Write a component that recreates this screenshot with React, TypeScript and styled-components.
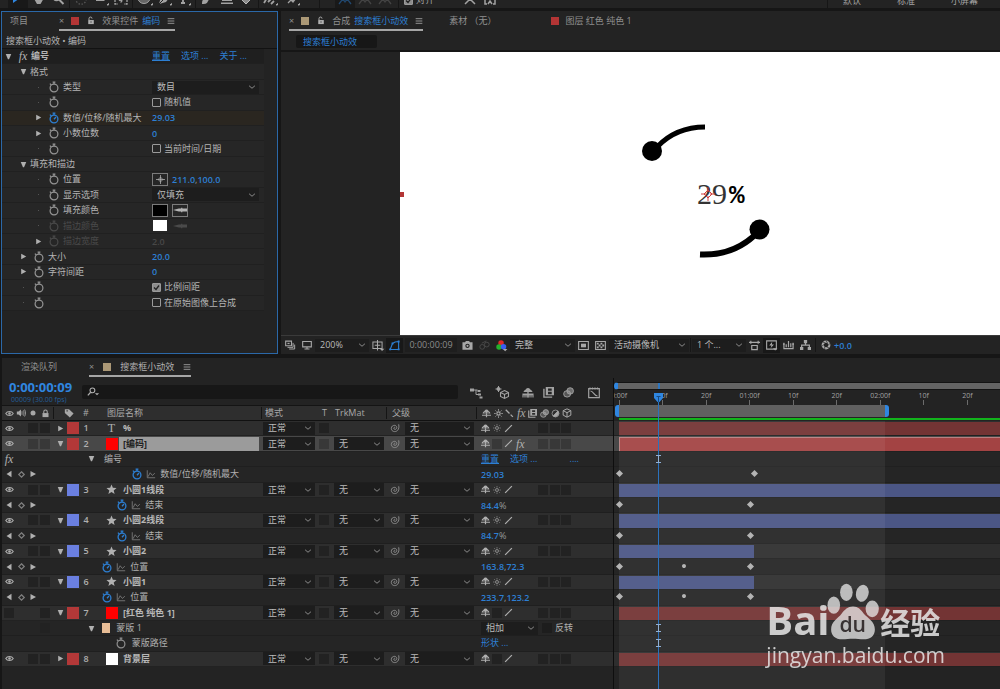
import React from "react";
import styled, { createGlobalStyle, css } from "styled-components";

const Global = createGlobalStyle`
  * { box-sizing: border-box; }
  body {
    margin: 0;
    background: #161616;
    color: #b0b0b0;
    font-family: "Open Sans", "Noto Sans CJK SC", sans-serif;
    font-size: 9px;
    line-height: 12px;
    overflow: hidden;
  }
  button, input, select { font: inherit; color: inherit; margin: 0; }
  svg { display: block; flex: none; }
`;

const blue = "#2d7fd3";

/* ---------- icons ---------- */

type IconProps = { size?: number; color?: string };

const Svg = styled.svg<{ $c?: string }>`
  color: ${(p) => p.$c || "inherit"};
  fill: none;
  stroke: currentColor;
  overflow: visible;
`;

const glyphs: Record<string, React.ReactNode> = {
  right: <path d="M3.5 3 9 6 3.5 9Z" fill="currentColor" stroke="none" />,
  left: <path d="M8.5 2.8 3.5 6l5 3.2Z" fill="currentColor" stroke="none" />,
  down: <path d="M3 3.2h6L6.6 9H5.4Z" fill="currentColor" stroke="none" />,
  chevron: <path d="M2.5 4.5 6 7.5l3.5-3" strokeWidth="1.2" />,
  watch: (
    <>
      <circle cx="6" cy="7" r="3.9" strokeWidth="1.2" />
      <path d="M4.6 1.2h2.8M6 1.5v1.4M1.9 2.6l1.3 1.3" strokeWidth="1.3" />
    </>
  ),
  watchOn: (
    <>
      <circle cx="6" cy="7" r="3.9" strokeWidth="1.3" />
      <path d="M4.6 1.2h2.8M6 1.5v1.4M1.9 2.6l1.3 1.3M6 7.2l2-2.2" strokeWidth="1.3" />
    </>
  ),
  graph: <path d="M1.5 1.5v9h9.5M2.5 9.2 5 4.5l2.6 3.2 3-2.6" strokeWidth="1" />,
  diamond: <path d="M6 3 9 6 6 9 3 6Z" strokeWidth="1.3" />,
  eye: (
    <>
      <path d="M1 6c2-3.4 8-3.4 10 0-2 3.4-8 3.4-10 0Z" strokeWidth="1.4" />
      <circle cx="6" cy="6" r="1.7" fill="currentColor" stroke="none" />
    </>
  ),
  speaker: (
    <>
      <path d="M1 4.3h2L6 1.8v8.4L3 7.7H1Z" fill="currentColor" stroke="none" />
      <path d="M7.2 3.8v4.4M8.8 2.8c1 2 1 4.4 0 6.4M10.3 1.8c1.5 2.8 1.5 5.6 0 8.4" />
    </>
  ),
  solo: <circle cx="6" cy="6" r="3" fill="currentColor" stroke="none" />,
  lock: (
    <>
      <path d="M2 5.4h8v5.4H2Z" fill="currentColor" stroke="none" />
      <path d="M3.7 5.5V3.6a2.3 2.3 0 0 1 4.6 0v1.9" strokeWidth="1.4" />
    </>
  ),
  unlock: (
    <>
      <path d="M3 5.4h7.4v5.4H3Z" fill="currentColor" stroke="none" />
      <path d="M4 5.5V3.4a2 2 0 0 1 4 0" strokeWidth="1.3" />
      <path d="M6.7 7v2" stroke="#232323" />
    </>
  ),
  tag: <path fillRule="evenodd" d="M1 1.5h5l5.5 5-4.5 4.8L1 6Zm2 1.2v1.5h1.5V2.7Z" fill="currentColor" stroke="none" />,
  star: (
    <path d="m6 .5 1.5 3.7 4 .2-3.100 2.600 1 3.900L6 8.800 2.600 10.900l1-3.900-3.100-2.600 4-.2Z" fill="currentColor" stroke="none" />
  ),
  whip: (
    <path d="M6.200 5.200C5 4.800 3.900 6.200 4.800 7.100c1.200 1.200 3.400.2 3.300-1.700C8 3.400 6.200 2.500 4.400 2.900 2 3.400.9 6 2 8.200c1.300 2.600 5.200 2.800 7.200.5C10.700 7 11 4.500 10.400 1.600" strokeWidth="1.100" />
  ),
  shy: (
    <>
      <path d="M.8 6C1 3.500 3 3.500 3.500 2.200 4.500.2 7.500.2 8.500 2.200 9 3.500 11 3.500 11.200 6Z" fill="currentColor" stroke="none" />
      <path d="M0 8.300h12M6 5.500v5.500" strokeWidth="1.600" />
      <path d="M4 4v2M8 4v2" stroke="#2a2a2a" strokeWidth="1" />
    </>
  ),
  sun: (
    <>
      <circle cx="6" cy="6" r="2.200" strokeWidth="1.500" />
      <path d="M6 .3v1.900M6 9.800v1.900M.3 6h1.900M9.800 6h1.900M2 2l1.200 1.200M8.800 8.800 10 10M10 2 8.800 3.200M3.200 8.800 2 10" strokeWidth="1.300" />
    </>
  ),
  slash: <path d="M1.500 10.500 10.500 1.500" strokeWidth="1.600" />,
  back: <path d="M1 1l5 5M7.500 7.500 10.500 10.500" strokeWidth="1.800" />,
  film: (
    <>
      <path fillRule="evenodd" d="M3 0h9v9H3Zm2.500 1.500V4h4V1.500Zm0 3.700v2.600h4V5.200Z" fill="currentColor" stroke="none" />
      <path d="M1 2v9h9" strokeWidth="1.500" />
    </>
  ),
  motion: (
    <>
      <ellipse cx="4.500" cy="7.500" rx="3.800" ry="3.500" fill="#555" />
      <ellipse cx="7.800" cy="4.300" rx="3.600" ry="3.500" fill="currentColor" fillOpacity=".6" />
    </>
  ),
  half: (
    <>
      <circle cx="6" cy="6" r="4.600" />
      <path d="M2.800 9.200A4.600 4.600 0 0 0 9.200 2.800Z" fill="currentColor" />
    </>
  ),
  cube: <path d="M6 1 10.600 3.200v5.400L6 11 1.400 8.600V3.200ZM1.400 3.200 6 5.600l4.600-2.400M6 5.600V11" strokeWidth="1.200" />,
  menu: <path d="M1 2.500h10M1 6h10M1 9.500h10" strokeWidth="1.500" />,
  search: (
    <>
      <circle cx="6.500" cy="4" r="2.900" strokeWidth="1.300" />
      <path d="M4.400 6.300 1 10" strokeWidth="1.500" />
      <path d="M9.500 7.500h5L12 10Z" fill="currentColor" stroke="none" />
    </>
  ),
  target: (
    <>
      <path d="M6 2.800 9.200 6 6 9.200 2.800 6Z" strokeWidth="1" />
      <path d="M6 0v12M0 6h12" strokeWidth="1" />
    </>
  ),
  dropper: <path d="M0 6 5 4.700h2V4h1v.8h4v2.400H8V8H7v-.7H5Z" fill="currentColor" stroke="none" />,
  layersView: (
    <>
      <path d="M.8 1.300h7v5.500h-7Z" strokeWidth="1.300" />
      <path d="M3 3.400h2.500v1.500H3Z" fill="currentColor" stroke="none" />
      <path d="M3 8.800h6.700V3.500M5 10.800h6.600V5.500" strokeWidth="1.200" />
    </>
  ),
  monitor: <path d="M.8 1.800h10.400v6.400H.8ZM6 8.200v2.300M3 10.700h6" strokeWidth="1.300" />,
  guides: (
    <>
      <path d="M1 2.200h10v7H1ZM6 0v11.500M3 5.700h6" strokeWidth="1.100" />
      <path d="M8.500 9.500h5L11 12Z" fill="currentColor" stroke="none" />
    </>
  ),
  mask: (
    <>
      <path d="M1.300 10.300 3.800 3.800C6 1.800 8 1.600 10.500 1.600v8.700Z" strokeWidth="1.200" />
      <path d="M.3 9.300h2v2h-2ZM9.500.6h2v2h-2ZM9.500 9.300h2v2h-2ZM2.800 2.800h2v2h-2Z" fill="currentColor" stroke="none" />
    </>
  ),
  camera: (
    <>
      <path fillRule="evenodd" d="M.5 2.500h2.800L4.300 1h3.400l1 1.500h2.800v8H.5ZM6 4a2.400 2.400 0 1 0 0 4.800A2.400 2.400 0 0 0 6 4Z" fill="currentColor" stroke="none" />
      <circle cx="6" cy="6.400" r="1.200" fill="currentColor" stroke="none" />
    </>
  ),
  snap: (
    <>
      <circle cx="3.500" cy="7.500" r="2.600" />
      <circle cx="8.500" cy="5" r="2.600" />
      <path d="M3 3.500 8 1" />
    </>
  ),
  rgb: (
    <g stroke="none">
      <circle cx="5.500" cy="3.300" r="3" fill="#e02828" />
      <circle cx="3.300" cy="7.500" r="3" fill="#23b12c" />
      <circle cx="8.200" cy="7.300" r="3" fill="#3a5ef0" />
      <path d="M7.500 9.800h5L10 12.300Z" fill="#a8a8a8" />
    </g>
  ),
  region: (
    <>
      <path d="M.7 1.700h10.600v8.600H.7Z" strokeWidth="1.200" />
      <path d="M3.300 4h5.400v4H3.300Z" fill="currentColor" stroke="none" />
    </>
  ),
  checker: (
    <>
      <path d="M.7 1.700h10.600v8.600H.7Z" strokeWidth="1.200" />
      <path d="M2 3h2v2H2ZM6 3h2v2H6ZM4 5h2v2H4ZM8 5h2v2H8ZM2 7h2v2H2ZM6 7h2v2H6Z" fill="currentColor" stroke="none" />
    </>
  ),
  aspect: <path d="M0 2.500h12M2 .8v3.400M10 .8v3.400M3 6h6v4.600H3Z" strokeWidth="1.300" />,
  fast: (
    <>
      <path d="M.7 1h10.600v9H.7Z" strokeWidth="1.200" />
      <path d="M6.800 2 3.500 6H6l-1 3 3.700-4H6.400Z" fill="currentColor" stroke="none" />
      <path d="M7.500 9h5L10 11.500Z" fill="currentColor" stroke="none" />
    </>
  ),
  histogram: <path d="M1 3v6.500h10V3M3.500 8V4.500M6 8V1M8.500 8V3.500M0 4.500h2M10 4.500h2" strokeWidth="1.300" />,
  tree: (
    <>
      <path d="M4.200 0h3.600v3.600H4.200ZM0 7.500h3.600V11H0ZM8.400 7.500H12V11H8.400Z" fill="currentColor" stroke="none" />
      <path d="M6 3v2.500M1.800 8V5.500h8.400V8" strokeWidth="1.300" />
    </>
  ),
  aperture: (
    <>
      <circle cx="6" cy="6" r="4" strokeWidth="2.600" />
      <path d="M6 .5 8 4M11 4 7.800 6.800M10 9.500 6.800 8.500M4.500 11 4.300 8M1 7.500l2.500-2M2.300 2.500l3 1" stroke="#232323" strokeWidth=".8" />
    </>
  ),
  flow: (
    <>
      <path d="M0 1.500h4v3H0ZM7.500 3h3v2h-3ZM8 6.500h3v2H8ZM9.500 9.500h3v2h-3Z" fill="currentColor" stroke="none" />
      <path d="M4 3h3.500M6 3v4.500h2" />
    </>
  ),
  draft: (
    <>
      <path d="m8.500 3.500 4 2v4l-4 2-4-2v-4ZM4.500 5.500l4 2 4-2M8.500 7.500v4" strokeWidth="1.100" />
      <circle cx="2.500" cy="2" r="1.900" fill="currentColor" stroke="none" />
      <path d="M2.500-1v6M-.5 2h6" />
    </>
  ),
  hideShy: (
    <>
      <path d="M0 10.500V6.500h12v4Z" fill="#6a6a6a" stroke="none" />
      <path d="M1.500 5C2 3 3.500 3.200 4 2 5 .5 7 .5 8 2c.5 1.200 2 1 2.500 3Z" fill="currentColor" stroke="none" />
      <path d="M1 7.500h10M6 5v5.500" strokeWidth="1.300" />
    </>
  ),
  editor: <path d="M.7 1.700h10.600v9H.7ZM2 .5v2M4.500.5v2M7 .5v2M9.500.5v2M2.500 4c3 0 3.500 5 7 5" strokeWidth="1.200" />,
  arrow: <path d="M1 0h11v2.500L7.500 4.500 1 9Z" fill="currentColor" stroke="none" />,
  hand: <path d="M1 3c2-1 2 3 3 2V0h5v5c2-1 2-3 3-1L8.500 10H5Z" fill="currentColor" stroke="none" />,
  zoom: (
    <>
      <circle cx="4.500" cy="3" r="3.500" strokeWidth="1.500" />
      <path d="m7 5.500 4.500 4.500" strokeWidth="2" />
    </>
  ),
  orbit: <circle cx="6" cy="5" r="5.200" strokeDasharray="1.500 1.500" strokeWidth="1.300" />,
  video: (
    <>
      <path d="M1 0h8.500v7H1Z" fill="currentColor" stroke="none" />
      <path d="M12 11h1.500V9.500Z" fill="currentColor" />
    </>
  ),
  pan: <path d="M0 2v8h3M12 2v8H9M6 2v5M3.500 5 6 8l2.500-3" strokeWidth="1.300" strokeDasharray="2.500 1" />,
  ellipse: (
    <>
      <ellipse cx="6" cy="4" rx="6" ry="5.500" fill="#666" />
      <path d="M13 11h1.500V9.500Z" fill="currentColor" />
    </>
  ),
  pen: (
    <>
      <path d="M1 10 3 3 7 0l4 4-3 4Z" fill="currentColor" stroke="none" />
      <path d="m1 10 5-5" stroke="#232323" />
      <path d="M12 11h1.500V9.500Z" fill="currentColor" />
    </>
  ),
  type: (
    <>
      <path d="M5 0v8.500M3 9h4" strokeWidth="1.800" />
      <path d="M11 11h1.500V9.500Z" fill="currentColor" />
    </>
  ),
  brush: <path d="M1 10c0-4 1-5 3-5l7-7 1.500 2L7 7c-1 3-3 3-6 3Z" fill="currentColor" stroke="none" />,
  stamp: <path d="M1 5h10v2H1ZM0 8.500h12V10H0ZM4 0h4v5H4Z" fill="currentColor" stroke="none" />,
  eraser: <path d="m1 6 5-5 5 3-6 6Z" fill="#8a8a8a" stroke="#bbb" />,
  roto: (
    <>
      <path d="M0 9 3 4l4-4M4 8l6-6M7 10l3-3" strokeWidth="1.800" />
      <path d="M12 11h1.500V9.500Z" fill="currentColor" />
    </>
  ),
  pin: (
    <>
      <path d="M2 9 5 6M3 4l4 4 3-4-3-4Z" fill="currentColor" strokeWidth="1.300" />
      <path d="M12 11h1.500V9.500Z" fill="currentColor" />
    </>
  ),
  mesh: <path d="m0 10 6-8 6 8M3 4l3 4 3-4" strokeWidth="1.300" />,
  snapA: <path d="m1 10 5-5 5 5" strokeWidth="1.500" />,
  snapB: <path d="M1 6v4h2M11 6v4H9M4 10l2-3 2 3" strokeWidth="1.500" />,
};

const Icon = ({ name, size = 10, color }: IconProps & { name: string }) => (
  <Svg viewBox="0 0 12 12" width={size} height={size} $c={color} aria-hidden="true">
    {glyphs[name]}
  </Svg>
);

/* ---------- shared controls ---------- */

const PlainButton = styled.button<{ $c?: string }>`
  border: 0;
  padding: 0;
  background: none;
  display: inline-flex;
  align-items: center;
  justify-content: center;
  white-space: pre;
  color: ${(p) => p.$c || "inherit"};
`;

const Value = styled(PlainButton)<{ $dim?: boolean }>`
  color: ${(p) => (p.$dim ? "#484848" : blue)};
  font-weight: 600;
  padding-top: 1px;
  em {
    font-style: normal;
    font-weight: 400;
    color: #999;
  }
`;

const LinkText = styled.a`
  color: ${blue};
  text-decoration: none;
  white-space: nowrap;
`;

const UnderlinedLink = styled(LinkText)`
  text-decoration: underline;
  text-underline-offset: 1px;
`;

const SelectBox = styled.span<{ $w: number }>`
  display: inline-flex;
  align-items: center;
  width: ${(p) => p.$w}px;
  height: 13px;
  background: #1d1d1d;
  position: relative;
  svg {
    position: absolute;
    right: 2px;
    pointer-events: none;
  }
`;

const NativeSelect = styled.select`
  appearance: none;
  width: 100%;
  height: 13px;
  border: 0;
  background: none;
  padding: 0 14px 0 5px;
  line-height: 12px;
  color: #bababa;
`;

const Select = ({ label, value, width }: { label: string; value: string; width: number }) => (
  <SelectBox $w={width}>
    <NativeSelect aria-label={label} defaultValue={value}>
      <option>{value}</option>
    </NativeSelect>
    <Icon name="chevron" size={10} color="#8a8a8a" />
  </SelectBox>
);

const CheckLabel = styled.label`
  display: inline-flex;
  align-items: center;
  gap: 3px;
  white-space: nowrap;
`;

const CheckInput = styled.input`
  appearance: none;
  width: 9px;
  height: 9px;
  border: 1px solid #9a9a9a;
  border-radius: 1px;
  &:checked {
    background: #8d8d8d;
  }
`;

const CheckWrap = styled.span`
  position: relative;
  display: inline-flex;
  svg {
    position: absolute;
    inset: 0;
    pointer-events: none;
  }
`;

const Check = ({ text, checked }: { text: string; checked?: boolean }) => (
  <CheckLabel>
    <CheckWrap>
      <CheckInput type="checkbox" defaultChecked={checked} />
      {checked && (
        <Svg viewBox="0 0 9 9" width={9} height={9} $c="#222">
          <path d="M2 4.500 4 6.500 7 2.500" strokeWidth="1.300" />
        </Svg>
      )}
    </CheckWrap>
    {text}
  </CheckLabel>
);

const Swatch = styled.i<{ $c: string; $w?: number; $h?: number }>`
  flex: none;
  width: ${(p) => p.$w || 8}px;
  height: ${(p) => p.$h || 8}px;
  background: ${(p) => p.$c};
`;

const TabStrip = styled.div`
  display: flex;
  height: 19px;
  color: #909090;
`;

const TabItem = styled.div<{ $active?: boolean; $left: number; $gap?: number }>`
  display: flex;
  align-items: center;
  gap: ${(p) => p.$gap || 7}px;
  margin-left: ${(p) => p.$left}px;
  white-space: pre;
  border-bottom: 2px solid ${(p) => (p.$active ? "#a6a6a6" : "transparent")};
`;

const TabName = styled(PlainButton)`
  b {
    font-weight: 400;
    color: ${blue};
    margin-left: 4px;
  }
`;

/* ---------- top toolbar ---------- */

const ToolBar = styled.div`
  display: flex;
  align-items: flex-end;
  height: 8px;
  overflow: hidden;
  background: #232323;
  padding-left: 8px;
  color: #a2a2a2;
`;

const Tool = styled(PlainButton)<{ $on?: boolean; $w?: number }>`
  flex: none;
  width: ${(p) => p.$w || 20}px;
  height: 19px;
  padding-top: 2px;
  background: ${(p) => (p.$on ? "#191919" : "none")};
`;

const ToolSep = styled.i<{ $m?: number }>`
  flex: none;
  width: 1px;
  height: 8px;
  margin: 0 ${(p) => p.$m || 1}px;
  background: #161616;
`;

const ToolText = styled.div`
  display: flex;
  gap: 36px;
  height: 15px;
  padding: 0 22px 0 14px;
  white-space: nowrap;
`;

const SnapToggle = styled.div`
  display: flex;
  align-items: flex-start;
  height: 14px;
  padding: 0 26px 0 2px;
`;

const Spacer = styled.i`
  flex: 1;
`;

const TopToolbar = () => (
  <ToolBar role="toolbar" aria-label="工具">
    <Tool $on aria-label="选取"><Icon name="arrow" size={12} color="#2f86e0" /></Tool>
    <Tool aria-label="手形"><Icon name="hand" size={12} /></Tool>
    <Tool aria-label="缩放"><Icon name="zoom" size={12} /></Tool>
    <ToolSep />
    <Tool aria-label="旋转"><Icon name="orbit" size={12} color="#555" /></Tool>
    <Tool aria-label="摄像机"><Icon name="video" size={12} /></Tool>
    <Tool aria-label="锚点"><Icon name="pan" size={12} /></Tool>
    <ToolSep />
    <Tool aria-label="椭圆"><Icon name="ellipse" size={12} /></Tool>
    <Tool aria-label="钢笔"><Icon name="pen" size={12} /></Tool>
    <Tool aria-label="文字"><Icon name="type" size={12} /></Tool>
    <ToolSep />
    <Tool aria-label="画笔"><Icon name="brush" size={12} /></Tool>
    <Tool aria-label="仿制图章"><Icon name="stamp" size={12} /></Tool>
    <Tool aria-label="橡皮擦"><Icon name="eraser" size={12} /></Tool>
    <ToolSep />
    <Tool aria-label="Roto 笔刷"><Icon name="roto" size={12} /></Tool>
    <Tool $w={24} aria-label="操控点"><Icon name="pin" size={12} /></Tool>
    <ToolSep $m={15} />
    <Tool $on aria-label="本地轴"><Icon name="mesh" size={12} color="#21486f" /></Tool>
    <Tool aria-label="世界轴"><Icon name="mesh" size={12} color="#444" /></Tool>
    <Tool aria-label="视图轴"><Icon name="mesh" size={12} color="#444" /></Tool>
    <ToolSep $m={3} />
    <SnapToggle><Check text="对齐" checked /></SnapToggle>
    <Tool aria-label="边缘对齐"><Icon name="snapA" size={12} /></Tool>
    <Tool aria-label="框对齐"><Icon name="snapB" size={12} /></Tool>
    <Spacer />
    <ToolSep />
    <ToolText>
      <PlainButton>默认</PlainButton>
      <PlainButton>标准</PlainButton>
      <PlainButton>小屏幕</PlainButton>
    </ToolText>
  </ToolBar>
);

/* ---------- effect controls ---------- */

const EffectsPanel = styled.section`
  flex: 0 0 277px;
  margin-left: 1px;
  border: 1px solid #2b68a8;
  background: #232323;
  padding-bottom: 42px;
`;

const Breadcrumb = styled.div`
  height: 18px;
  padding: 4px 4px 0;
  border-bottom: 1px solid #121212;
  color: #b4b4b4;
`;

const EffectRows = styled.div`
  display: grid;
  grid-template-rows: repeat(17, 1fr);
  height: 262px;
  margin-right: 13px;
`;

const EffectRow = styled.div<{ $tint?: "key" | "head"; $dim?: boolean }>`
  display: grid;
  grid-template-columns: 150px 1fr;
  align-items: center;
  border-bottom: 1px solid #202020;
  background: ${(p) => (p.$tint === "key" ? "#2a2620" : p.$tint === "head" ? "#1f1f1f" : "#262626")};
  color: ${(p) => (p.$dim ? "#4a4a4a" : "#b4b4b4")};
`;

const EffectName = styled.div<{ $indent: number; $bold?: boolean }>`
  display: flex;
  align-items: center;
  padding-left: ${(p) => p.$indent}px;
  white-space: nowrap;
  font-weight: ${(p) => (p.$bold ? 700 : 400)};
`;

const Slot = styled.span<{ $w: number }>`
  display: flex;
  flex: none;
  align-items: center;
  justify-content: center;
  width: ${(p) => p.$w}px;
`;

const EffectValue = styled.div<{ $gap?: number }>`
  display: flex;
  align-items: center;
  gap: ${(p) => p.$gap || 4}px;
  height: 14px;
`;

const Dot = styled.i`
  width: 1px;
  height: 1px;
  background: #555;
`;

const Frame = styled(PlainButton)<{ $lit?: boolean }>`
  width: 16px;
  height: 13px;
  border: 1px solid ${(p) => (p.$lit ? "#7b7b7b" : "transparent")};
`;

const Fx = styled.span`
  font-family: "Liberation Serif", serif;
  font-style: italic;
  font-weight: 400;
  font-size: 12px;
`;

type Effect = {
  depth: number;
  name?: string;
  kind?: "head" | "group";
  twirl?: "right" | "down";
  keyed?: boolean;
  dim?: boolean;
  value?: React.ReactNode;
};

const effects: Effect[] = [
  {
    depth: 0, name: "编号", kind: "head", twirl: "down",
    value: (
      <EffectValue $gap={11}>
        <UnderlinedLink href="#reset">重置</UnderlinedLink>
        <LinkText href="#options">选项 ...</LinkText>
        <LinkText href="#about">关于 ...</LinkText>
      </EffectValue>
    ),
  },
  { depth: 1, name: "格式", kind: "group", twirl: "down" },
  { depth: 2, name: "类型", value: <Select label="类型" value="数目" width={107} /> },
  { depth: 2, value: <Check text="随机值" /> },
  { depth: 2, name: "数值/位移/随机最大", twirl: "right", keyed: true, value: <Value>29.03</Value> },
  { depth: 2, name: "小数位数", twirl: "right", value: <Value>0</Value> },
  { depth: 2, value: <Check text="当前时间/日期" /> },
  { depth: 1, name: "填充和描边", kind: "group", twirl: "down" },
  {
    depth: 2, name: "位置",
    value: (
      <>
        <Frame $lit aria-label="选择位置"><Icon name="target" size={9} /></Frame>
        <Value>211.0<em>,</em>100.0</Value>
      </>
    ),
  },
  { depth: 2, name: "显示选项", value: <Select label="显示选项" value="仅填充" width={107} /> },
  {
    depth: 2, name: "填充颜色",
    value: (
      <>
        <Frame $lit aria-label="填充颜色"><Swatch $c="#000" $w={14} $h={11} /></Frame>
        <Frame $lit aria-label="吸取填充颜色"><Icon name="dropper" size={14} /></Frame>
      </>
    ),
  },
  {
    depth: 2, name: "描边颜色", dim: true,
    value: (
      <>
        <Frame aria-label="描边颜色"><Swatch $c="#fff" $w={14} $h={11} /></Frame>
        <Frame aria-label="吸取描边颜色"><Icon name="dropper" size={14} /></Frame>
      </>
    ),
  },
  { depth: 2, name: "描边宽度", dim: true, twirl: "right", value: <Value $dim>2.0</Value> },
  { depth: 1, name: "大小", twirl: "right", value: <Value>20.0</Value> },
  { depth: 1, name: "字符间距", twirl: "right", value: <Value>0</Value> },
  { depth: 1, value: <Check text="比例间距" checked /> },
  { depth: 1, value: <Check text="在原始图像上合成" /> },
];

const EffectControls = () => (
  <EffectsPanel aria-label="效果控件">
    <TabStrip>
      <TabItem $left={8}><TabName>项目</TabName></TabItem>
      <TabItem $active $left={31}>
        <PlainButton aria-label="关闭">×</PlainButton>
        <Swatch $c="#b33535" />
        <Icon name="unlock" size={9} color="#b0b0b0" />
        <TabName>效果控件<b>编码</b></TabName>
        <Icon name="menu" size={8} />
      </TabItem>
    </TabStrip>
    <Breadcrumb>搜索框小动效 • 编码</Breadcrumb>
    <EffectRows>
      {effects.map((e, i) => (
        <EffectRow key={i} $tint={e.kind === "head" ? "head" : e.keyed ? "key" : undefined} $dim={e.dim}>
          <EffectName $indent={e.depth * 15} $bold={e.kind === "head"}>
            <Slot $w={13}>
              {e.twirl ? <Icon name={e.twirl} size={11} color="#b0b0b0" /> : <Dot />}
            </Slot>
            {e.kind === "head" && <Slot $w={16}><Fx>fx</Fx></Slot>}
            {!e.kind && (
              <Slot $w={18}>
                <Icon name={e.keyed ? "watchOn" : "watch"} size={12} color={e.keyed ? blue : e.dim ? undefined : "#959595"} />
              </Slot>
            )}
            {e.name}
          </EffectName>
          <EffectValue>{e.value}</EffectValue>
        </EffectRow>
      ))}
    </EffectRows>
  </EffectsPanel>
);

/* ---------- composition viewer ---------- */

const CompPanel = styled.section`
  flex: 1;
  min-width: 0;
  margin-left: 3px;
  padding-top: 1px;
  background: #232323;
  display: flex;
  flex-direction: column;
`;

const CompCrumb = styled.div`
  height: 21px;
  padding: 4px 0 0 15px;
  border-bottom: 2px solid #161616;
`;

const CrumbButton = styled(PlainButton)`
  display: flex;
  justify-content: flex-start;
  width: 81px;
  height: 13px;
  padding-left: 7px;
  background: #171717;
  border-radius: 2px;
  color: ${blue};
`;

const Viewport = styled.div`
  flex: 1;
  display: flex;
  min-height: 0;
  padding-left: 119px;
  overflow: hidden;
`;

const Stage = styled.div`
  flex: 1;
  min-width: 0;
  background: #fff;
`;

const ViewBar = styled.div`
  display: flex;
  align-items: center;
  height: 19px;
  border-top: 1px solid #3a3a3a;
  color: #a8a8a8;
`;

const ViewTime = styled(PlainButton)`
  width: 52px;
  height: 14px;
  margin: 0 2px;
  background: #1e1e1e;
  color: #8c8c8c;
`;

const ViewIcon = styled(PlainButton)<{ $on?: boolean }>`
  flex: none;
  width: 17px;
  height: 15px;
  background: ${(p) => (p.$on ? "#181818" : "none")};
`;

const BarSep = styled.i`
  width: 1px;
  height: 14px;
  background: #161616;
  margin: 0 1px;
`;

const Composition = () => (
  <CompPanel aria-label="合成">
    <TabStrip>
      <TabItem $active $left={8}>
        <PlainButton aria-label="关闭">×</PlainButton>
        <Swatch $c="#ab9876" />
        <Icon name="unlock" size={9} color="#b0b0b0" />
        <TabName>合成<b>搜索框小动效</b></TabName>
        <Icon name="menu" size={8} />
      </TabItem>
      <TabItem $left={26}><TabName>素材 （无）</TabName></TabItem>
      <TabItem $left={54}>
        <Swatch $c="#b33535" />
        <TabName>图层 红色 纯色 1</TabName>
      </TabItem>
    </TabStrip>
    <CompCrumb><CrumbButton>搜索框小动效</CrumbButton></CompCrumb>
    <Viewport>
      <Stage>
        <svg width="600" height="283" viewBox="0 0 600 283" role="img" aria-label="29%">
          <path d="M257 95Q276 75 305 75" fill="none" stroke="#000" strokeWidth="5" />
          <circle cx="252" cy="99" r="10" />
          <path d="M300 202.500Q335 204 358 180" fill="none" stroke="#000" strokeWidth="6" />
          <circle cx="359.500" cy="177.500" r="10" />
          <text x="297" y="152" fontFamily="Liberation Serif, serif" fontSize="30" fill="#333">29</text>
          <text x="329" y="151" fontFamily="Liberation Mono, monospace" fontWeight="700" fontSize="26">%</text>
          <g fill="none" stroke="#d04040" strokeWidth="1">
            <path d="m308 138 4 4-4 4-4-4ZM308 135v5M308 144v5M301 142h5M310 142h5" />
          </g>
          <rect x="0" y="140" width="4" height="5" fill="#b33535" />
        </svg>
      </Stage>
    </Viewport>
    <ViewBar>
      <ViewIcon aria-label="始终预览"><Icon name="layersView" size={10} /></ViewIcon>
      <ViewIcon aria-label="主查看器"><Icon name="monitor" size={10} /></ViewIcon>
      <Select label="放大率" value="200%" width={54} />
      <ViewIcon aria-label="参考线"><Icon name="guides" size={11} /></ViewIcon>
      <ViewIcon $on aria-label="蒙版可见性"><Icon name="mask" size={11} color={blue} /></ViewIcon>
      <ViewTime>0:00:00:09</ViewTime>
      <ViewIcon aria-label="快照"><Icon name="camera" size={11} /></ViewIcon>
      <ViewIcon aria-label="显示快照"><Icon name="snap" size={11} color="#4a4a4a" /></ViewIcon>
      <ViewIcon aria-label="通道"><Icon name="rgb" size={11} /></ViewIcon>
      <Select label="分辨率" value="完整" width={65} />
      <ViewIcon aria-label="目标区域"><Icon name="region" size={11} /></ViewIcon>
      <ViewIcon aria-label="透明网格"><Icon name="checker" size={11} /></ViewIcon>
      <Select label="视图" value="活动摄像机" width={80} />
      <BarSep />
      <Select label="视图布局" value="1 个..." width={54} />
      <ViewIcon aria-label="像素长宽比"><Icon name="aspect" size={11} /></ViewIcon>
      <ViewIcon $on aria-label="快速预览"><Icon name="fast" size={11} /></ViewIcon>
      <ViewIcon aria-label="时间轴"><Icon name="histogram" size={11} /></ViewIcon>
      <ViewIcon aria-label="流程图"><Icon name="tree" size={11} /></ViewIcon>
      <BarSep />
      <ViewIcon aria-label="重置曝光度"><Icon name="aperture" size={10} /></ViewIcon>
      <Value>+0.0</Value>
    </ViewBar>
  </CompPanel>
);

/* ---------- timeline ---------- */

const columns = "51px 52px 156px 56px 14px 55px 18px 72px 1fr";

const TimelinePanel = styled.section`
  flex: 1;
  display: flex;
  flex-direction: column;
  gap: 1px;
  margin: 4px 0 0 2px;
  background: #232323;
`;

const Split = styled.div`
  flex: 1;
  display: grid;
  grid-template-columns: 611px 1fr;
`;

const LayerPane = styled.div`
  display: flex;
  flex-direction: column;
`;

const Controls = styled.div`
  display: flex;
  align-items: center;
  height: 28px;
  border-bottom: 1px solid #141414;
  padding-left: 7px;
`;

const Clock = styled.div`
  display: flex;
  flex-direction: column;
  flex: 0 0 73px;
`;

const BigTime = styled(PlainButton)`
  justify-content: flex-start;
  color: #2f86e0;
  font-size: 13px;
  font-weight: 700;
  line-height: 15px;
`;

const SmallTime = styled.span`
  color: #245f9a;
  font-size: 7px;
  line-height: 9px;
  padding-left: 2px;
`;

const SearchBox = styled.label`
  display: flex;
  align-items: center;
  width: 376px;
  height: 14px;
  padding-left: 5px;
  background: #171717;
  border-radius: 2px;
`;

const SearchInput = styled.input`
  flex: 1;
  min-width: 0;
  margin-left: 8px;
  height: 12px;
  border: 0;
  outline: 0;
  background: none;
`;

const Switches = styled.div`
  display: flex;
  align-items: center;
  margin-left: 8px;
  color: #a2a2a2;
`;

const ColumnHead = styled.div`
  display: grid;
  grid-template-columns: ${columns};
  align-items: center;
  height: 15px;
  background: #2e2e2e;
  border-bottom: 1px solid #111;
  color: #a8a8a8;
`;

const HeadCell = styled.div<{ $pad?: number; $rule?: boolean }>`
  display: flex;
  align-items: center;
  height: 12px;
  padding-left: ${(p) => p.$pad || 0}px;
  white-space: nowrap;
  border-left: ${(p) => (p.$rule ? "1px solid #151515" : "0")};
`;

const Rows = styled.div`
  display: grid;
  grid-template-rows: repeat(16, 1fr);
  height: 246px;
`;

const rowShade = (layer?: boolean, selected?: boolean) => (selected ? "#484848" : layer ? "#2e2e2e" : "#252525");

const LayerRow = styled.div<{ $selected?: boolean }>`
  display: grid;
  grid-template-columns: ${columns};
  align-items: center;
  border-bottom: 1px solid #222;
  background: ${(p) => rowShade(true, p.$selected)};
`;

const PropRow = styled.div`
  display: grid;
  grid-template-columns: 51px 423px 1fr;
  align-items: center;
  border-bottom: 1px solid #1f1f1f;
  background: #252525;
`;

const AvCells = styled.div`
  display: grid;
  grid-template-columns: repeat(4, 12px);
  align-items: center;
  justify-items: center;
  padding-left: 1px;
`;

const Well = styled(PlainButton)<{ $lit?: boolean; $col?: number }>`
  width: 10px;
  height: 10px;
  background: ${(p) => (p.$lit ? "#383838" : "#222")};
  ${(p) => p.$col && css`grid-column: ${p.$col};`}
`;

const LabelCells = styled.div`
  display: grid;
  grid-template-columns: 14px 12px 14px;
  align-items: center;
  justify-items: center;
  font-weight: 600;
`;

const NameCell = styled.div`
  display: flex;
  align-items: center;
  height: 14px;
`;

const LayerName = styled.span<{ $selected?: boolean }>`
  flex: 1;
  margin: 0 2px 0 1px;
  padding: 1px 0 1px 4px;
  font-weight: 700;
  color: ${(p) => (p.$selected ? "#222" : "#b8b8b8")};
  background: ${(p) => (p.$selected ? "#9b9b9b" : "none")};
`;

const Cell = styled.div<{ $pad?: number }>`
  display: flex;
  align-items: center;
  padding-left: ${(p) => p.$pad || 0}px;
`;

const SwitchCells = styled.div`
  display: grid;
  grid-template-columns: repeat(8, 1fr);
  width: 92px;
  margin-left: 4px;
  align-items: center;
  justify-items: center;
`;

const PropName = styled.div<{ $indent: number }>`
  display: flex;
  align-items: center;
  padding-left: ${(p) => p.$indent}px;
  color: #b0b0b0;
  white-space: pre;
`;

const PropValue = styled.div<{ $gap?: number }>`
  display: flex;
  align-items: center;
  gap: ${(p) => p.$gap || 4}px;
  padding-left: 5px;
`;

const KeyNav = () => (
  <AvCells>
    <PlainButton aria-label="上一个关键帧"><Icon name="left" size={12} /></PlainButton>
    <PlainButton aria-label="添加关键帧"><Icon name="diamond" size={11} color="#808080" /></PlainButton>
    <PlainButton aria-label="下一个关键帧"><Icon name="right" size={12} /></PlainButton>
  </AvCells>
);

type Bar = { end: number; color: "red" | "blue" | "hot" };

type Row = {
  layer?: {
    no: number;
    name: string;
    label: string;
    open?: boolean;
    icon: React.ReactNode;
    selected?: boolean;
    hidden?: boolean;
    noMatte?: boolean;
    shape?: boolean;
    fx?: boolean;
  };
  prop?: React.ReactNode;
  bar?: Bar;
  keys?: number[];
  dots?: number[];
  beam?: boolean;
};

const keyedProp = (name: string, indent: number, value: React.ReactNode) => (
  <>
    <KeyNav />
    <PropName $indent={indent}>
      <Slot $w={12}><Icon name="watchOn" size={12} color={blue} /></Slot>
      <Slot $w={15}><Icon name="graph" size={10} color="#808080" /></Slot>
      <span>{" "}{name}</span>
    </PropName>
    <PropValue><Value>{value}</Value></PropValue>
  </>
);

const RED = "#b33838";
const BLUE = "#6a7fe0";
const starIcon = <Icon name="star" size={11} />;

const LayerT = styled.span`
  font-family: "Liberation Serif", serif;
  font-size: 12px;
`;

const DotsLink = styled(LinkText)`
  margin-right: 34px;
`;

const InvertBox = styled.input`
  appearance: none;
  width: 10px;
  height: 10px;
  background: #1d1d1d;
`;

const rows: Row[] = [
  { layer: { no: 1, name: "%", label: RED, icon: <LayerT>T</LayerT>, noMatte: true, shape: true }, bar: { end: 90, color: "red" } },
  {
    layer: { no: 2, name: "[编码]", label: RED, open: true, icon: <Swatch $c="#f00" $w={12} $h={12} />, selected: true, fx: true },
    bar: { end: 90, color: "hot" },
  },
  {
    prop: (
      <>
        <AvCells><Fx>fx</Fx></AvCells>
        <PropName $indent={32}>
          <Slot $w={12}><Icon name="down" size={11} /></Slot>
          <span>{"   "}编号</span>
        </PropName>
        <PropValue $gap={11}>
          <UnderlinedLink href="#reset-layer">重置</UnderlinedLink>
          <LinkText href="#layer-options">选项 ...</LinkText>
          <Spacer />
          <DotsLink href="#more" aria-label="更多">....</DotsLink>
        </PropValue>
      </>
    ),
    beam: true,
  },
  { prop: keyedProp("数值/位移/随机最大", 78, "29.03"), keys: [0, 31] },
  { layer: { no: 3, name: "小圆1线段", label: BLUE, open: true, icon: starIcon, shape: true }, bar: { end: 90, color: "blue" } },
  { prop: keyedProp("结束", 63, <>84.4<em>%</em></>), keys: [0, 30] },
  { layer: { no: 4, name: "小圆2线段", label: BLUE, open: true, icon: starIcon, shape: true }, bar: { end: 90, color: "blue" } },
  { prop: keyedProp("结束", 63, <>84.7<em>%</em></>), keys: [0, 30] },
  { layer: { no: 5, name: "小圆2", label: BLUE, open: true, icon: starIcon, shape: true }, bar: { end: 31, color: "blue" } },
  { prop: keyedProp("位置", 48, <>163.8<em>,</em>72.3</>), keys: [0, 30], dots: [15] },
  { layer: { no: 6, name: "小圆1", label: BLUE, open: true, icon: starIcon, shape: true }, bar: { end: 31, color: "blue" } },
  { prop: keyedProp("位置", 48, <>233.7<em>,</em>123.2</>), keys: [0, 30], dots: [15] },
  {
    layer: { no: 7, name: "[红色 纯色 1]", label: RED, open: true, icon: <Swatch $c="#f00" $w={12} $h={12} />, hidden: true },
    bar: { end: 90, color: "red" },
  },
  {
    prop: (
      <>
        <AvCells><Well $col={4} aria-label="锁定" /></AvCells>
        <PropName $indent={32}>
          <Slot $w={12}><Icon name="down" size={11} /></Slot>
          <Slot $w={17}><Swatch $c="#e8bd96" $h={10} /></Slot>
          <span> 蒙版 1</span>
        </PropName>
        <PropValue>
          <Select label="蒙版模式" value="相加" width={57} />
          <CheckLabel>
            <InvertBox type="checkbox" />
            反转
          </CheckLabel>
        </PropValue>
      </>
    ),
    beam: true,
  },
  {
    prop: (
      <>
        <AvCells />
        <PropName $indent={62}>
          <Slot $w={12}><Icon name="watch" size={12} color="#8f8f8f" /></Slot>
          <span>{"  "}蒙版路径</span>
        </PropName>
        <PropValue><LinkText href="#shape">形状 ...</LinkText></PropValue>
      </>
    ),
    beam: true,
  },
  { layer: { no: 8, name: "背景层", label: RED, icon: <Swatch $c="#fff" $w={12} $h={12} /> }, bar: { end: 90, color: "red" } },
];

const LayerCells = ({ l }: { l: NonNullable<Row["layer"]> }) => (
  <LayerRow $selected={l.selected}>
    <AvCells>
      {l.hidden ? <Well aria-label="显示" /> : <PlainButton aria-label="隐藏"><Icon name="eye" size={9} /></PlainButton>}
      {!l.hidden && <Well $col={3} $lit={l.selected} aria-label="独奏" />}
      <Well $col={4} $lit={l.selected} aria-label="锁定" />
    </AvCells>
    <LabelCells>
      <PlainButton aria-label="展开"><Icon name={l.open ? "down" : "right"} size={11} /></PlainButton>
      <Swatch $c={l.label} $w={12} $h={12} />
      <span>{l.no}</span>
    </LabelCells>
    <NameCell>
      <Slot $w={13}>{l.icon}</Slot>
      <LayerName $selected={l.selected}>{l.name}</LayerName>
    </NameCell>
    <Cell $pad={2}><Select label={`模式 ${l.no}`} value="正常" width={52} /></Cell>
    <Cell $pad={2}><Well $lit={l.selected} aria-label="保留透明度" /></Cell>
    <Cell $pad={3}>{!l.noMatte && <Select label={`轨道遮罩 ${l.no}`} value="无" width={50} />}</Cell>
    <Cell $pad={4}><Icon name="whip" size={10} color="#8f8f8f" /></Cell>
    <Cell $pad={1}><Select label={`父级 ${l.no}`} value="无" width={69} /></Cell>
    <SwitchCells>
      <Icon name="shy" size={9} />
      {l.shape ? <Icon name="sun" size={8} color="#8a8a8a" /> : <Well $lit={l.selected} aria-label="折叠" />}
      <Icon name="slash" size={9} />
      {l.fx ? <Fx>fx</Fx> : <span />}
      <span />
      <Well $lit={l.selected} aria-label="运动模糊" />
      <Well $lit={l.selected} aria-label="调整图层" />
      <Well $lit={l.selected} aria-label="3D 图层" />
    </SwitchCells>
  </LayerRow>
);

/* track side */

const VISIBLE_FRAMES = 87.5;
const at = (frame: number) => `${(frame / VISIBLE_FRAMES) * 100}%`;

const TrackPane = styled.div`
  position: relative;
  display: flex;
  flex-direction: column;
  border-left: 1px solid #0e0e0e;
  overflow: hidden;
`;

const Navigator = styled.div`
  height: 8px;
  margin-top: 4px;
  background: #646464;
  border: solid #141414;
  border-width: 1px 0;
  border-left: 4px solid #2f86e0;
  border-radius: 4px 0 0 4px;
`;

const Ruler = styled.div`
  position: relative;
  height: 15px;
  margin-left: 5px;
  font-size: 7px;
  line-height: 9px;
  color: #a2a2a2;
`;

const Tick = styled.span`
  position: absolute;
  bottom: 0;
  display: flex;
  flex-direction: column;
  align-items: center;
  width: 30px;
  margin-left: -15px;
  &::after {
    content: "";
    width: 1px;
    height: 5px;
    background: #6c6c6c;
  }
`;

const WorkLane = styled.div`
  height: 12px;
  margin-left: 1px;
  padding-left: 4px;
  background: #232323;
`;

const WorkArea = styled.div`
  height: 12px;
  background: #606060;
  border: solid #2f86e0;
  border-width: 0 4px;
  border-radius: 3px;
  margin: 0 -4px;
`;

const CacheLine = styled.div`
  height: 2px;
  margin: 1px 0 1px 5px;
  background: #12b31c;
`;

const TrackRow = styled.div<{ $layer?: boolean; $selected?: boolean }>`
  padding-left: 5px;
  border-bottom: 1px solid #202020;
  background: ${(p) => rowShade(p.$layer, p.$selected)};
`;

const Lane = styled.div`
  position: relative;
  height: 100%;
`;

const barColors = { red: "#733434", blue: "#4b5685", hot: "#a34343" };

const Clip = styled.div<{ $color: Bar["color"] }>`
  position: absolute;
  top: 1px;
  bottom: 0;
  left: 0;
  z-index: 1;
  background: ${(p) => barColors[p.$color]};
  ${(p) => p.$color === "hot" && css`border: solid #b98080; border-width: 1px 0 0 1px;`}
`;

const Key = styled.div`
  position: absolute;
  z-index: 3;
  top: 50%;
  width: 5px;
  height: 5px;
  margin: -3px 0 0 -2px;
  background: #b4b4b4;
  transform: rotate(45deg);
`;

const RoundKey = styled(Key)`
  width: 4px;
  height: 4px;
  border-radius: 50%;
`;

const Beam = styled.div`
  position: absolute;
  z-index: 4;
  top: 50%;
  margin: -4px 0 0 -2px;
`;

const Overlay = styled.div`
  position: absolute;
  inset: 0 0 0 5px;
  pointer-events: none;
`;

const LitSpan = styled.div`
  position: absolute;
  z-index: 2;
  top: 43px;
  bottom: 0;
  left: 0;
  background: rgba(255, 255, 255, 0.06);
`;

const Playhead = styled.div`
  position: absolute;
  z-index: 3;
  top: 14px;
  bottom: 0;
  width: 9px;
  margin-left: -4px;
  display: flex;
  flex-direction: column;
  align-items: center;
  &::after {
    content: "";
    flex: 1;
    width: 1px;
    background: #2b72bd;
  }
`;

const NavMark = styled.div`
  position: absolute;
  top: 5px;
  width: 2px;
  height: 6px;
  background: #2f76bf;
`;

const ticks = ["0:00f", "10f", "20f", "01:00f", "10f", "20f", "02:00f", "10f", "20f"];

const Timeline = () => (
  <TimelinePanel aria-label="时间轴">
    <TabStrip>
      <TabItem $left={19}><TabName>渲染队列</TabName></TabItem>
      <TabItem $active $left={32} $gap={9}>
        <PlainButton aria-label="关闭">×</PlainButton>
        <Swatch $c="#ab9876" />
        <TabName $c="#b0b0b0">搜索框小动效</TabName>
        <Icon name="menu" size={8} />
      </TabItem>
    </TabStrip>
    <Split>
      <LayerPane>
        <Controls>
          <Clock>
            <BigTime>0:00:00:09</BigTime>
            <SmallTime>00009 (30.00 fps)</SmallTime>
          </Clock>
          <SearchBox>
            <Icon name="search" size={10} />
            <SearchInput type="search" aria-label="搜索图层" />
          </SearchBox>
          <Switches>
            <Tool aria-label="合成流程图"><Icon name="flow" size={12} /></Tool>
            <Tool $w={32} aria-label="草图 3D"><Icon name="draft" size={12} /></Tool>
            <Tool aria-label="隐藏消隐图层"><Icon name="hideShy" size={12} /></Tool>
            <Tool aria-label="帧混合"><Icon name="film" size={11} /></Tool>
            <Tool aria-label="运动模糊"><Icon name="motion" size={11} /></Tool>
            <Tool $w={32} aria-label="图表编辑器"><Icon name="editor" size={12} /></Tool>
          </Switches>
        </Controls>
        <ColumnHead>
          <AvCells>
            <Icon name="eye" size={9} />
            <Icon name="speaker" size={10} />
            <Icon name="solo" size={10} />
            <Icon name="lock" size={9} />
          </AvCells>
          <HeadCell $rule $pad={9}>
            <Slot $w={12}><Icon name="tag" size={10} /></Slot>
            <Slot $w={22}>#</Slot>
          </HeadCell>
          <HeadCell $pad={2}>图层名称</HeadCell>
          <HeadCell $rule $pad={3}>模式</HeadCell>
          <HeadCell $pad={5}>T</HeadCell>
          <HeadCell $pad={4}>TrkMat</HeadCell>
          <HeadCell $rule $pad={5}>父级</HeadCell>
          <HeadCell />
          <HeadCell $rule>
            <SwitchCells>
              <Icon name="shy" size={9} />
              <Icon name="sun" size={9} />
              <Icon name="back" size={9} />
              <Fx>fx</Fx>
              <Icon name="film" size={9} />
              <Icon name="motion" size={9} />
              <Icon name="half" size={9} />
              <Icon name="cube" size={10} />
            </SwitchCells>
          </HeadCell>
        </ColumnHead>
        <Rows>
          {rows.map((r, i) => (r.layer ? <LayerCells key={i} l={r.layer} /> : <PropRow key={i}>{r.prop}</PropRow>))}
        </Rows>
      </LayerPane>
      <TrackPane>
        <Navigator />
        <Ruler>
          {ticks.map((t, i) => (
            <Tick key={i} style={{ left: at(i * 10) }}>{t}</Tick>
          ))}
        </Ruler>
        <WorkLane>
          <WorkArea style={{ width: `calc(${at(61)} + 8px)` }} />
        </WorkLane>
        <CacheLine />
        <Rows>
          {rows.map((r, i) => (
            <TrackRow key={i} $layer={!!r.layer} $selected={r.layer?.selected}>
              <Lane>
                {r.bar && <Clip $color={r.bar.color} style={{ width: at(r.bar.end) }} />}
                {r.keys?.map((k) => <Key key={k} style={{ left: at(k) }} />)}
                {r.dots?.map((k) => <RoundKey key={k} style={{ left: at(k) }} />)}
                {r.beam && (
                  <Beam style={{ left: at(9) }}>
                    <svg width="5" height="8" viewBox="0 0 5 8" fill="none" stroke="#8fb0d6">
                      <path d="M0 .5h5M0 7.500h5M2.500 0v8" />
                    </svg>
                  </Beam>
                )}
              </Lane>
            </TrackRow>
          ))}
        </Rows>
        <Overlay>
          <LitSpan style={{ width: at(61) }} />
          <NavMark style={{ left: at(9) }} />
          <Playhead style={{ left: at(9) }}>
            <svg width="9" height="10" viewBox="0 0 9 10">
              <path d="M0 1h9v5L5.500 10h-2L0 6Z" fill="#2f86e0" />
              <path d="M2.500 4.500h4M4.500 4.500V10" stroke="#184a80" />
            </svg>
          </Playhead>
        </Overlay>
      </TrackPane>
    </Split>
  </TimelinePanel>
);

/* ---------- watermark ---------- */

const Watermark = styled.div`
  position: fixed;
  right: 55px;
  bottom: 21px;
  z-index: 10;
  color: rgba(232, 232, 232, 0.85);
  white-space: nowrap;
`;

const Brand = styled.div`
  display: flex;
  align-items: flex-end;
  height: 58px;
  margin-bottom: 2px;
`;

const BrandLatin = styled.span`
  width: 61px;
  font-weight: 700;
  font-size: 40px;
  line-height: 41px;
`;

const BrandHan = styled.span`
  padding-left: 1px;
  font-weight: 700;
  font-size: 30px;
  line-height: 34px;
`;

const Domain = styled.div`
  font-size: 21px;
  line-height: 26px;
  font-weight: 400;
`;

const BaiduMark = () => (
  <Watermark>
    <Brand>
      <BrandLatin>Bai</BrandLatin>
      <svg width="52" height="57" viewBox="684 366 156 172" fill="currentColor" opacity=".9">
        <ellipse cx="704" cy="433" rx="19" ry="26" />
        <ellipse cx="742" cy="394" rx="19" ry="26" />
        <ellipse cx="790" cy="397" rx="19" ry="26" transform="rotate(14 790 397)" />
        <ellipse cx="820" cy="444" rx="20" ry="25" />
        <path d="M762 437c16 0 24 10 32 21 12 14 34 24 34 48 0 20-14 30-34 30-12 0-20-2-32-2s-20 2-32 2c-22 0-34-12-34-30 0-24 20-32 32-48 9-11 18-21 34-21Z" />
        <text x="721" y="514" fontSize="64" fontWeight="600" fill="#3a3434">du</text>
      </svg>
      <BrandHan>经验</BrandHan>
    </Brand>
    <Domain>jingyan.baidu.com</Domain>
  </Watermark>
);

/* ---------- page ---------- */

const Page = styled.main`
  display: flex;
  flex-direction: column;
  min-height: 100vh;
`;

const Workspace = styled.div`
  display: flex;
  margin-top: 3px;
`;

export default function App() {
  return (
    <>
      <Global />
      <Page>
        <TopToolbar />
        <Workspace>
          <EffectControls />
          <Composition />
        </Workspace>
        <Timeline />
      </Page>
      <BaiduMark />
    </>
  );
}
